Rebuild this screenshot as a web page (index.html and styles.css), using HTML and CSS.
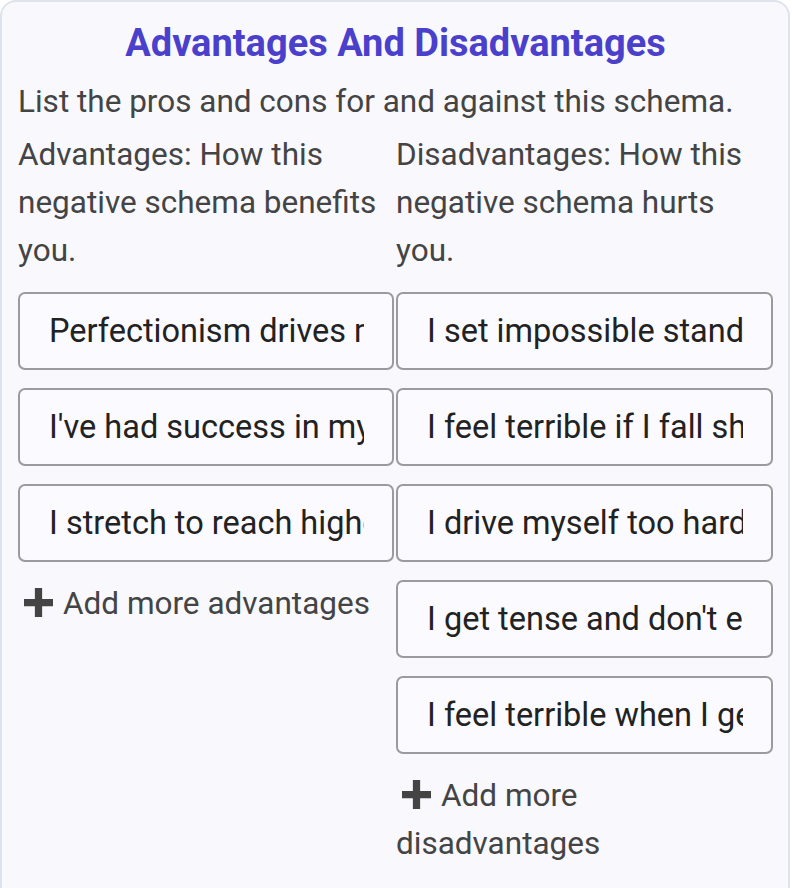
FILE: index.html
```html
<!DOCTYPE html>
<html>
<head>
<meta charset="utf-8">
<link rel="stylesheet" href="styles.css">
</head>
<body>
<div class="card">
  <h1 class="title">Advantages And Disadvantages</h1>
  <p class="intro">List the pros and cons for and against this schema.</p>
  <div class="cols">
    <div class="col">
      <p class="col-head">Advantages: How this negative schema benefits you.</p>
      <input class="entry" type="text" value="Perfectionism drives me to achieve">
      <input class="entry" type="text" value="I've had success in my career">
      <input class="entry" type="text" value="I stretch to reach higher goals">
      <button class="add" type="button"><svg class="plus" viewBox="0 0 28 28"><path d="M10.5 0h7v10.5H28v7H17.5V28h-7V17.5H0v-7h10.5z"/></svg>Add more advantages</button>
    </div>
    <div class="col">
      <p class="col-head">Disadvantages: How this negative schema hurts you.</p>
      <input class="entry" type="text" value="I set impossible standards">
      <input class="entry" type="text" value="I feel terrible if I fall short">
      <input class="entry" type="text" value="I drive myself too hard">
      <input class="entry" type="text" value="I get tense and don't enjoy things">
      <input class="entry" type="text" value="I feel terrible when I get criticized">
      <button class="add" type="button"><svg class="plus" viewBox="0 0 28 28"><path d="M10.5 0h7v10.5H28v7H17.5V28h-7V17.5H0v-7h10.5z"/></svg>Add more disadvantages</button>
    </div>
  </div>
</div>
</body>
</html>
```

FILE: styles.css
```css
html, body {
  margin: 0;
  padding: 0;
  background: #ffffff;
}
body {
  font-family: Roboto, "Liberation Sans", sans-serif;
  color: #444444;
}
.card {
  box-sizing: border-box;
  width: 790px;
  min-height: 888px;
  background: #f8f8fd;
  border: 2px solid #dfe4ec;
  border-bottom: none;
  border-radius: 16px 16px 0 0;
  padding: 17px 15px 0 16px;
}
.title {
  margin: 0 0 11px;
  text-align: center;
  font-size: 38px;
  font-weight: 700;
  line-height: 48px;
  color: #4a40cc;
}
.intro {
  margin: 0;
  font-size: 31.5px;
  line-height: 48px;
  color: #444444;
}
.cols {
  display: grid;
  grid-template-columns: 376px 1fr;
  column-gap: 2px;
  margin-top: 5px;
}
.col {
  display: flex;
  flex-direction: column;
  align-items: stretch;
}
.col-head {
  margin: 0 0 17px;
  font-size: 31.5px;
  line-height: 48px;
  color: #444444;
}
.entry {
  box-sizing: border-box;
  height: 78px;
  margin: 0 0 18px;
  padding: 0 28px 0 29px;
  border: 2px solid #9b9b9f;
  border-radius: 7px;
  background: #fafaff;
  font-family: Roboto, "Liberation Sans", sans-serif;
  font-size: 32.5px;
  color: #222222;
  outline: none;
  min-width: 0;
  width: 100%;
}
.add {
  align-self: flex-start;
  margin: 0;
  padding: 0;
  border: none;
  background: none;
  text-align: left;
  font-family: Roboto, "Liberation Sans", sans-serif;
  font-size: 31.5px;
  line-height: 48px;
  color: #444444;
}
.plus {
  width: 29px;
  height: 29px;
  fill: #444444;
  vertical-align: -3px;
  margin: 0 10px 0 6px;
}
```
